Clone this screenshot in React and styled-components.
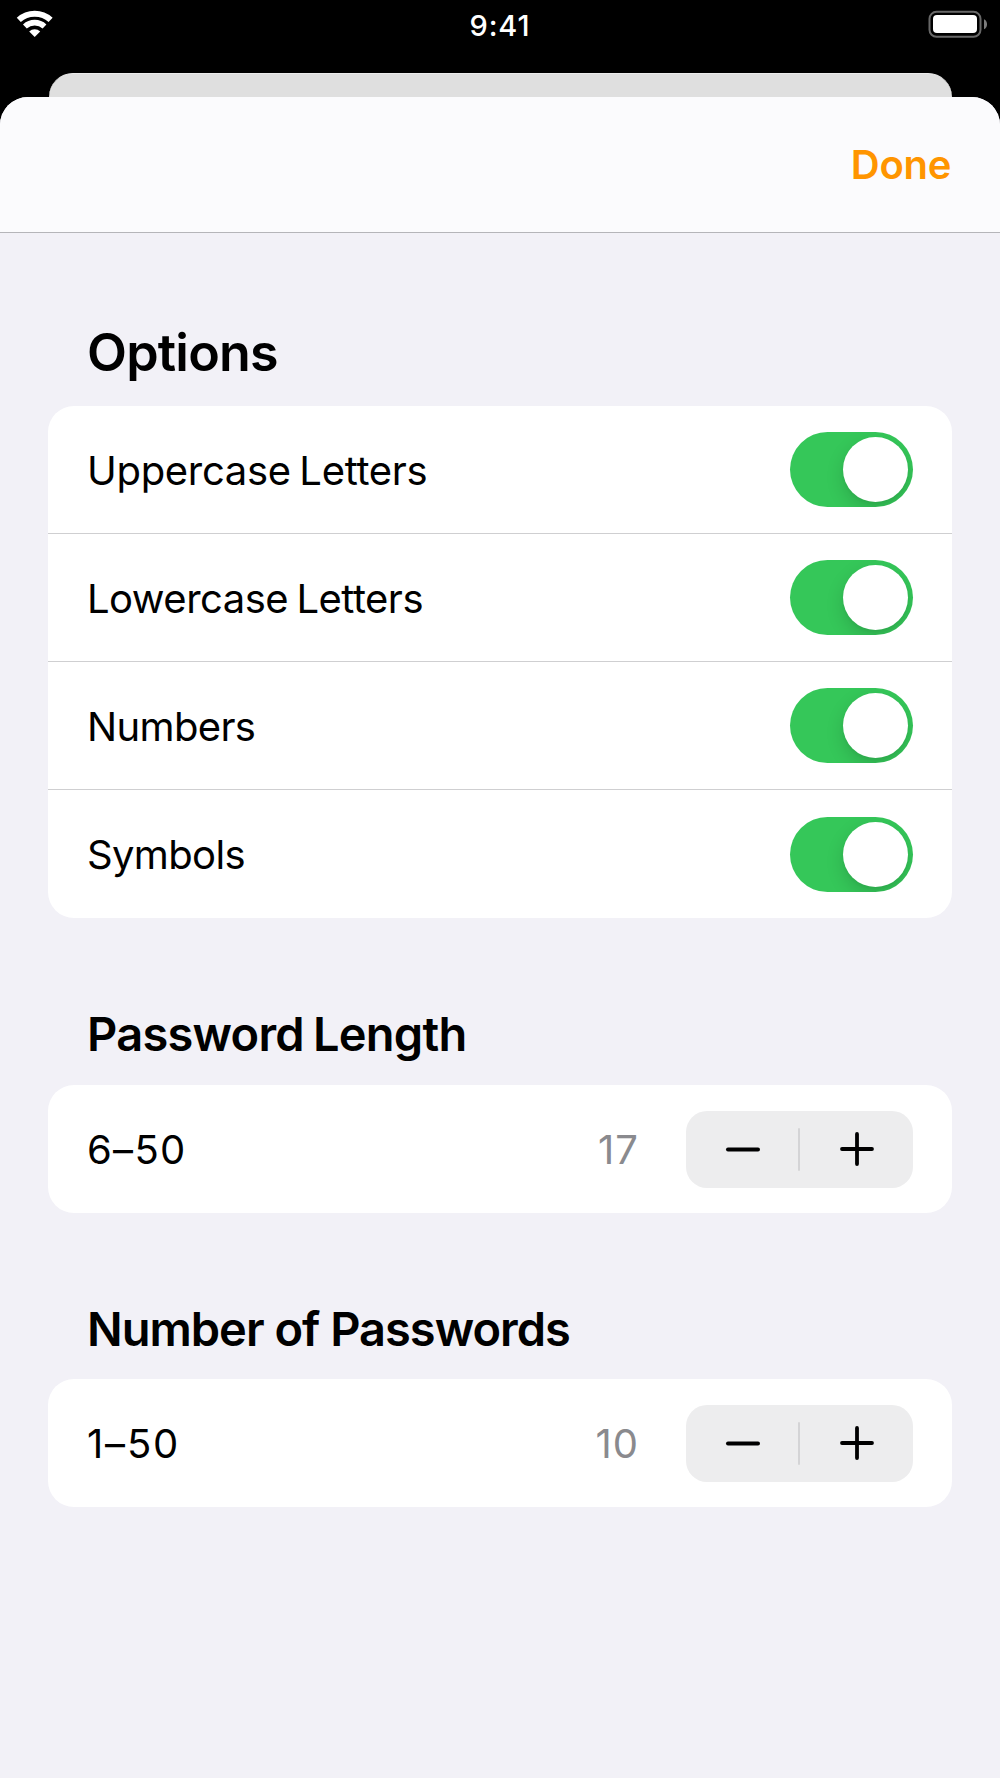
import React, { useState } from 'react';
import styled, { createGlobalStyle } from 'styled-components';

const GlobalStyle = createGlobalStyle`
  body {
    margin: 0;
    background: #000;
    font-family: Inter, 'Liberation Sans', sans-serif;
    color: #000;
  }

  button {
    padding: 0;
    border: none;
    background: none;
    font: inherit;
    color: inherit;
  }
`;

const Screen = styled.div`
  display: flex;
  flex-direction: column;
  box-sizing: border-box;
  width: 1000px;
  height: 1778px;
  overflow: hidden;
  background: #000;
`;

const StatusBar = styled.div`
  display: grid;
  grid-template-columns: 1fr auto 1fr;
  align-items: start;
  height: 73px;
  flex-shrink: 0;
`;

const Clock = styled.span`
  margin-top: 5px;
  font-size: 29px;
  line-height: 42px;
  font-weight: 500;
  letter-spacing: 0.9px;
  color: #fff;
`;

const BatteryIcon = styled.svg`
  justify-self: end;
`;

const BackSheet = styled.div`
  height: 24px;
  margin: 0 48.5px;
  flex-shrink: 0;
  box-sizing: border-box;
  border-top: 1px solid #ececec;
  border-radius: 24px 24px 0 0;
  background: #dfdfdf;
`;

const Sheet = styled.div`
  flex-grow: 1;
  border-radius: 28px 28px 0 0;
  overflow: hidden;
  background: #f2f1f7;
`;

const NavBar = styled.div`
  display: flex;
  justify-content: flex-end;
  align-items: center;
  box-sizing: border-box;
  height: 136px;
  padding: 0 49px 0 0;
  border-bottom: 1px solid #b5b5b9;
  background: #fbfbfd;
`;

const DoneButton = styled.button`
  font-size: 40px;
  line-height: 48px;
  font-weight: 560;
  letter-spacing: -0.3px;
  color: #ff9500;
`;

const Section = styled.section`
  padding: ${props => props.$top}px 48px 0;
`;

const Heading = styled.h2`
  margin: 0 0 ${props => props.$gap}px;
  padding: 0 39px;
  font-size: ${props => (props.$large ? 52 : 47)}px;
  line-height: 60px;
  font-weight: 600;
  letter-spacing: ${props => props.$spacing}px;
  word-spacing: ${props => props.$wordSpacing || 0}px;
`;

const Card = styled.div`
  border-radius: 26px;
  overflow: hidden;
  background: #fff;
`;

const Row = styled.div`
  display: flex;
  align-items: center;
  box-sizing: border-box;
  height: 128px;
  padding: 0 39px;

  &:not(:last-child) {
    border-bottom: 1px solid #cfcfd1;
  }
`;

const Label = styled.span`
  flex-grow: 1;
  padding-top: 2px;
  font-size: 40px;
  line-height: 50px;
  letter-spacing: ${props => props.$spacing}px;
  word-spacing: -2.4px;
`;

const Value = styled.span`
  margin-right: 47px;
  padding-top: 2px;
  font-size: 40px;
  line-height: 50px;
  letter-spacing: 1px;
  color: #8a8a8e;
`;

const Switch = styled.button`
  display: flex;
  align-items: center;
  justify-content: ${props => (props.$on ? 'flex-end' : 'flex-start')};
  box-sizing: border-box;
  width: 123px;
  height: 75px;
  padding: 0 5px;
  border-radius: 38px;
  overflow: hidden;
  background: ${props => (props.$on ? '#35c759' : '#e9e9ea')};
`;

const Knob = styled.span`
  width: 65px;
  height: 65px;
  border-radius: 50%;
  background: #fff;
  box-shadow: 0 7px 18px rgba(0, 0, 0, 0.15), 0 2px 3px rgba(0, 0, 0, 0.04);
`;

const StepperBox = styled.div`
  display: grid;
  grid-template-columns: 112px 2px 113px;
  align-items: center;
  height: 77px;
  border-radius: 21px;
  background: #ededee;
`;

const StepButton = styled.button`
  display: flex;
  justify-content: center;
  align-items: center;
  height: 100%;
`;

const Divider = styled.span`
  height: 43px;
  border-radius: 1px;
  background: #d4d4d6;
`;

const OPTIONS = [
  { label: 'Uppercase Letters', spacing: -0.31 },
  { label: 'Lowercase Letters', spacing: -0.52 },
  { label: 'Numbers', spacing: -0.65 },
  { label: 'Symbols', spacing: -0.65 },
];

function Wifi() {
  return (
    <svg width="70" height="48" viewBox="0 0 70 48" fill="none" stroke="#fff">
      <path d="M18.8 19.9A23.6 23.6 0 0 1 50.6 19.9" strokeWidth="6" />
      <path d="M24.9 26.5A14.4 14.4 0 0 1 44.5 26.5" strokeWidth="5.6" />
      <path d="M34.7 37L29.2 31.4A8 8 0 0 1 40.2 31.4Z" fill="#fff" stroke="none" />
    </svg>
  );
}

function Battery() {
  return (
    <BatteryIcon width="80" height="48" viewBox="0 0 80 48">
      <rect x="9.5" y="11.8" width="51" height="25" rx="7" fill="none" stroke="#686868" strokeWidth="2" />
      <rect x="13" y="15" width="44" height="18" rx="4" fill="#fff" />
      <path d="M64 19.3C66 20.2 67 22 67 24.3S66 28.4 64 29.3Z" fill="#7c7c7c" />
    </BatteryIcon>
  );
}

function OptionRow({ label, spacing }) {
  const [on, setOn] = useState(true);

  return (
    <Row>
      <Label $spacing={spacing}>{label}</Label>
      <Switch $on={on} onClick={() => setOn(!on)}>
        <Knob />
      </Switch>
    </Row>
  );
}

function StepperRow({ min, max, initial, spacing }) {
  const [value, setValue] = useState(initial);

  const handleMinus = () => setValue(Math.max(min, value - 1))
  const handlePlus = () => setValue(Math.min(max, value + 1))

  return (
    <Row>
      <Label $spacing={spacing}>{min}–{max}</Label>
      <Value>{value}</Value>
      <StepperBox>
        <StepButton onClick={handleMinus}>
          <svg width="36" height="36" stroke="#000" strokeWidth="4" strokeLinecap="round">
            <path d="M4 18.5H34" />
          </svg>
        </StepButton>
        <Divider />
        <StepButton onClick={handlePlus}>
          <svg width="36" height="36" stroke="#000" strokeWidth="3.8" strokeLinecap="round">
            <path d="M3 18H33M18 3V33" />
          </svg>
        </StepButton>
      </StepperBox>
    </Row>
  );
}

export default function App() {
  return (
    <Screen>
      <GlobalStyle />
      <StatusBar>
        <Wifi />
        <Clock>9:41</Clock>
        <Battery />
      </StatusBar>
      <BackSheet />
      <Sheet>
        <NavBar>
          <DoneButton>Done</DoneButton>
        </NavBar>
        <Section $top={90}>
          <Heading $large $gap={23} $spacing={-0.8}>Options</Heading>
          <Card>
            {OPTIONS.map(option => (
              <OptionRow key={option.label} {...option} />
            ))}
          </Card>
        </Section>
        <Section $top={86}>
          <Heading $gap={21} $spacing={-0.75} $wordSpacing={-2}>Password Length</Heading>
          <Card>
            <StepperRow min={6} max={50} initial={17} spacing={1.3} />
          </Card>
        </Section>
        <Section $top={86}>
          <Heading $gap={20} $spacing={-1}>Number of Passwords</Heading>
          <Card>
            <StepperRow min={1} max={50} initial={10} spacing={1.8} />
          </Card>
        </Section>
      </Sheet>
    </Screen>
  );
}
